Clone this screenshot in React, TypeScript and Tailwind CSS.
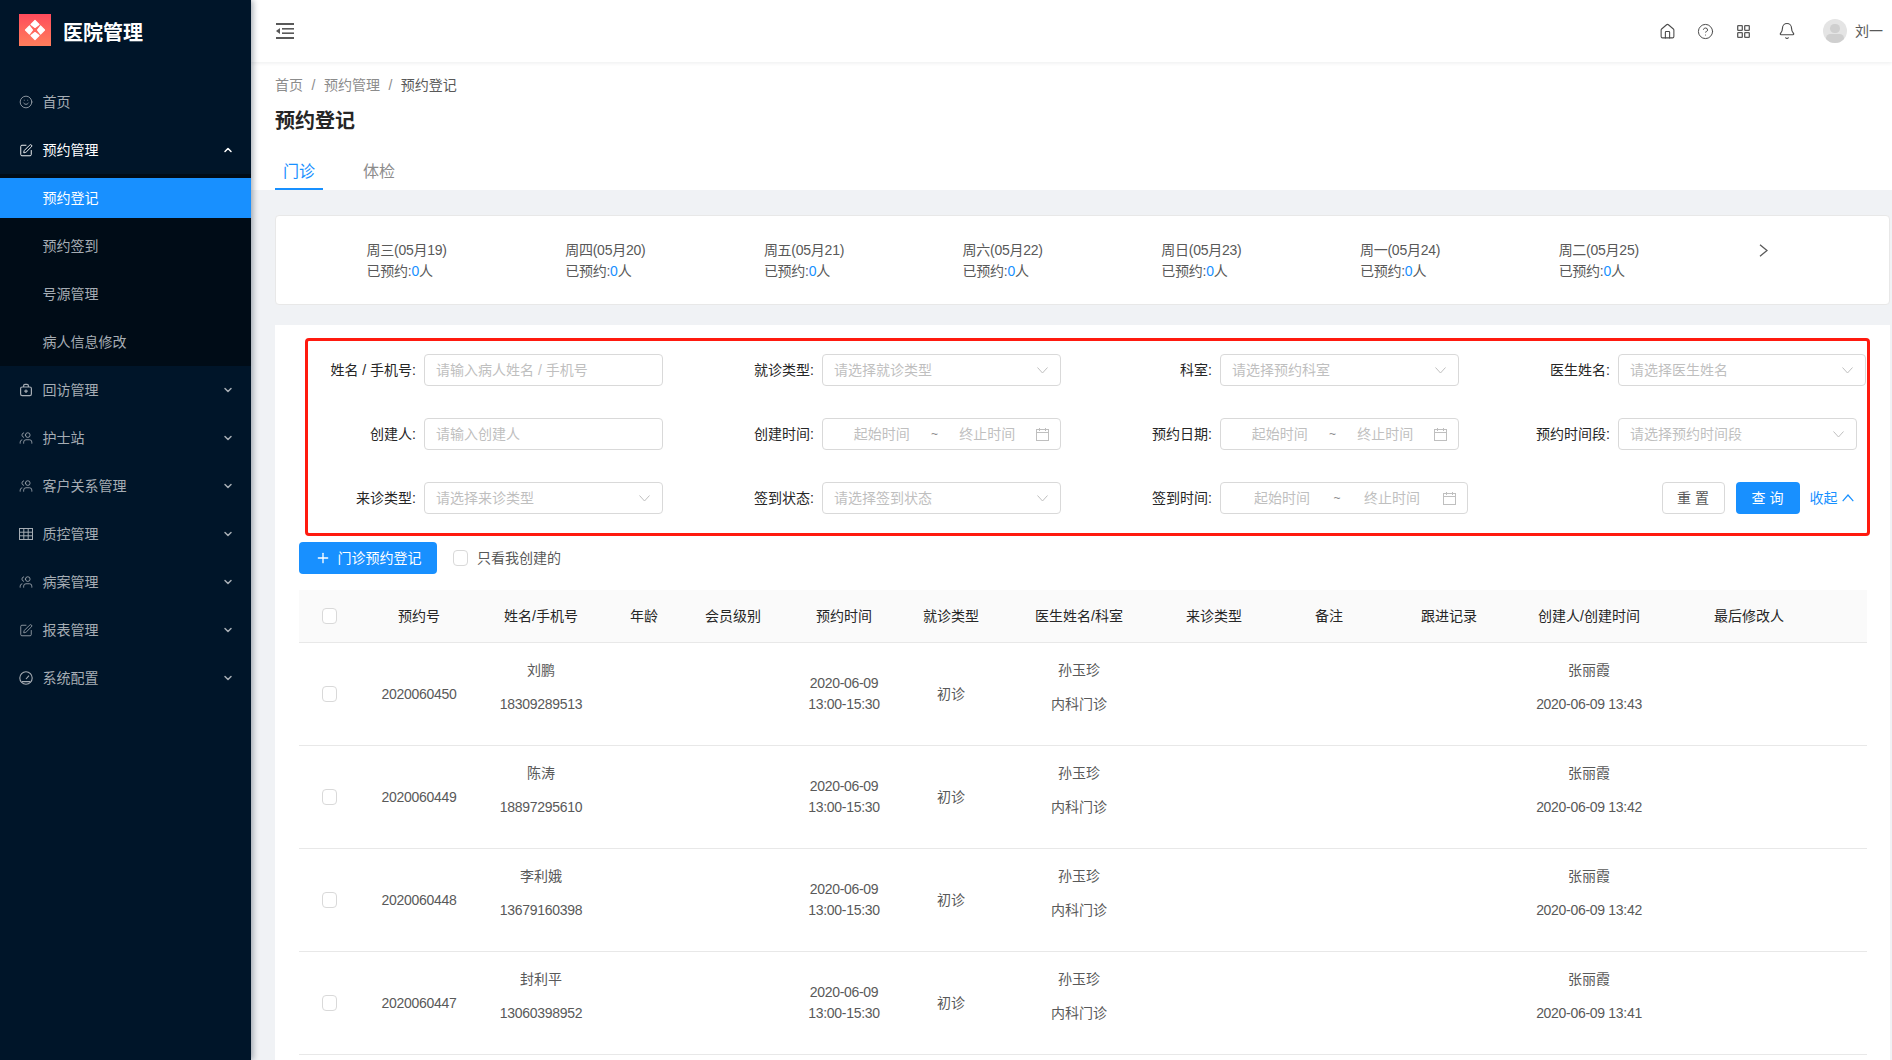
import type { ReactNode } from 'react';
import { ChevronDown, ChevronUp, House, CircleHelp, Bell, Smile, SquarePen, Users, Plus } from 'lucide-react';

const font = { fontFamily: '"Liberation Sans", "Noto Sans CJK SC", sans-serif' };

function BagIcon() {
  return (
    <svg width="14" height="14" viewBox="0 0 14 14" fill="none" stroke="currentColor" strokeWidth="1.2">
      <rect x="1.6" y="4" width="10.8" height="8.6" rx="1.6" />
      <path d="M4.6 4 V2.8 Q4.6 1.4 6 1.4 H8 Q9.4 1.4 9.4 2.8 V4 M7 6.4 V10 M5.2 8.2 H8.8" />
    </svg>
  );
}

function GridIcon() {
  return (
    <svg width="14" height="12" viewBox="0 0 14 12" fill="none" stroke="currentColor" strokeWidth="1">
      <rect x="0.5" y="0.5" width="13" height="11" />
      <path d="M0.5 4.2 H13.5 M0.5 7.8 H13.5 M4.8 0.5 V11.5 M9.2 0.5 V11.5" />
    </svg>
  );
}

function GaugeIcon() {
  return (
    <svg width="14" height="14" viewBox="0 0 14 14" fill="none" stroke="currentColor" strokeWidth="1.1">
      <circle cx="7" cy="7" r="6.2" />
      <path d="M7 8 L10 4.6 M3 10.6 H11" />
    </svg>
  );
}

const people = <Users size={16} strokeWidth={1.4} className="-scale-x-100" />;

const menus: { label: string; icon: ReactNode }[] = [
  { label: '回访管理', icon: <BagIcon /> },
  { label: '护士站', icon: people },
  { label: '客户关系管理', icon: people },
  { label: '质控管理', icon: <GridIcon /> },
  { label: '病案管理', icon: people },
  { label: '报表管理', icon: <SquarePen size={15} strokeWidth={1.4} /> },
  { label: '系统配置', icon: <GaugeIcon /> },
];

const days = ['周三(05月19)', '周四(05月20)', '周五(05月21)', '周六(05月22)', '周日(05月23)', '周一(05月24)', '周二(05月25)'];

const columns = ['预约号', '姓名/手机号', '年龄', '会员级别', '预约时间', '就诊类型', '医生姓名/科室', '来诊类型', '备注', '跟进记录', '创建人/创建时间', '最后修改人'];

const rows = [
  { no: '2020060450', name: '刘鹏', phone: '18309289513', created: '2020-06-09 13:43' },
  { no: '2020060449', name: '陈涛', phone: '18897295610', created: '2020-06-09 13:42' },
  { no: '2020060448', name: '李利娥', phone: '13679160398', created: '2020-06-09 13:42' },
  { no: '2020060447', name: '封利平', phone: '13060398952', created: '2020-06-09 13:41' },
];

const gridCols = 'grid grid-cols-[60px_120px_124px_82px_96px_126px_88px_168px_102px_128px_112px_168px_152px_42px]';

function Logo() {
  return (
    <div className="w-8 h-8 bg-gradient-to-b from-[#ff4a5c] to-[#ff7d5c] flex items-center justify-center">
      <svg width="24" height="24" viewBox="0 0 24 24" fill="#fff" stroke="#fff" strokeWidth="1.2" strokeLinejoin="round">
        <path d="M12 2.5 L16 6.5 L12 9.5 L8 6.5 Z M2.5 12 L6.5 8 L9.5 12 L6.5 16 Z M21.5 12 L17.5 8 L14.5 12 L17.5 16 Z M12 21.5 L16 17.5 L12 14.5 L8 17.5 Z" />
      </svg>
    </div>
  );
}

function MenuItem({ label, icon, open }: { label: string; icon: ReactNode; open?: boolean }) {
  return (
    <div className={'h-10 flex items-center pl-[19px] pr-[17px] text-sm ' + (open ? 'text-white' : 'text-[#a6adb4]')}>
      <span className="w-[14px] h-[14px] flex items-center justify-center mr-[9.5px]">{icon}</span>
      <span className="flex-1">{label}</span>
      {open !== undefined && (open ? <ChevronUp size={12} strokeWidth={3} /> : <ChevronDown size={12} strokeWidth={3} />)}
    </div>
  );
}

function Sidebar() {
  return (
    <aside className="w-[251px] shrink-0 h-full bg-[#001529] shadow-[2px_0_6px_rgba(0,21,41,0.35)] z-10 overflow-hidden">
      <div className="h-[60px] flex items-center pl-[19px]">
        <Logo />
        <span className="ml-3 mt-[6px] text-xl font-semibold text-white">医院管理</span>
      </div>
      <div className="pt-[22px]">
        <MenuItem label="首页" icon={<Smile size={16} strokeWidth={1.4} />} />
        <div className="mt-2">
          <MenuItem label="预约管理" icon={<SquarePen size={15} strokeWidth={1.6} />} open />
        </div>
        <div className="mt-1 bg-[#000c17] py-1 flex flex-col gap-2 text-sm text-[#a6adb4]">
          <div className="h-10 bg-[#1890ff] text-white flex items-center pl-[42.5px]">预约登记</div>
          <div className="h-10 flex items-center pl-[42.5px]">预约签到</div>
          <div className="h-10 flex items-center pl-[42.5px]">号源管理</div>
          <div className="h-10 flex items-center pl-[42.5px]">病人信息修改</div>
        </div>
        <div className="mt-1 flex flex-col gap-2">
          {menus.map((m) => (
            <MenuItem key={m.label} label={m.label} icon={m.icon} open={false} />
          ))}
        </div>
      </div>
    </aside>
  );
}

function Topbar() {
  return (
    <header className="h-[62px] shrink-0 bg-white shadow-[0_1px_4px_rgba(0,21,41,0.08)] z-[5] flex items-center pl-[25px] pr-[9px] text-[#4a4a4a]">
      <svg width="18" height="16" viewBox="0 0 18 16" fill="#595959">
        <rect x="0" y="0" width="18" height="2" />
        <rect x="6" y="5" width="12" height="1.6" />
        <rect x="6" y="9.4" width="12" height="1.6" />
        <rect x="0" y="14" width="18" height="2" />
        <path d="M4 5 L0 8 L4 11 Z" />
      </svg>
      <div className="flex-1" />
      <House size={17} strokeWidth={1.5} />
      <CircleHelp size={17} strokeWidth={1.4} className="ml-[21px]" />
      <svg width="13" height="13" viewBox="0 0 13 13" fill="none" stroke="#595959" strokeWidth="1.3" className="ml-[23px]">
        <rect x="0.7" y="0.7" width="4.6" height="4.6" rx="0.6" />
        <rect x="7.7" y="0.7" width="4.6" height="4.6" rx="0.6" />
        <rect x="0.7" y="7.7" width="4.6" height="4.6" rx="0.6" />
        <rect x="7.7" y="7.7" width="4.6" height="4.6" rx="0.6" />
      </svg>
      <Bell size={18} strokeWidth={1.5} className="ml-[28px]" />
      <div className="ml-[27px] w-6 h-6 rounded-full bg-[#e4e4e4] overflow-hidden flex flex-col items-center">
        <div className="w-[10px] h-[10px] rounded-full bg-[#cfcfcf] mt-[5px]" />
        <div className="w-[18px] h-[10px] rounded-full bg-[#cfcfcf] mt-[1px]" />
      </div>
      <span className="ml-2 text-sm text-[#595959]">刘一</span>
    </header>
  );
}

function DownIcon() {
  return (
    <svg width="11" height="7" viewBox="0 0 11 7" fill="none" stroke="#bfbfbf" strokeWidth="1">
      <path d="M0.5 0.5 L5.5 6 L10.5 0.5" />
    </svg>
  );
}

function CalendarIcon() {
  return (
    <svg width="13" height="13" viewBox="0 0 13 13" fill="none" stroke="#bfbfbf" strokeWidth="1" className="shrink-0">
      <rect x="0.5" y="1.5" width="12" height="11" />
      <path d="M0.5 4.5 H12.5 M3.5 0 V3 M9.5 0 V3" />
    </svg>
  );
}

function Field({ label, children }: { label: string; children: ReactNode }) {
  return (
    <div className="flex items-center h-8">
      <label className="w-[108px] text-right text-sm text-[#262626] whitespace-nowrap">{label}:</label>
      <div className="ml-2">{children}</div>
    </div>
  );
}

function TextBox({ placeholder }: { placeholder: string }) {
  return (
    <div className="w-[239px] h-8 border border-[#d9d9d9] rounded flex items-center px-[11px] text-sm text-[#bfbfbf]">{placeholder}</div>
  );
}

function SelectBox({ placeholder, wide }: { placeholder: string; wide?: boolean }) {
  return (
    <div className={'h-8 border border-[#d9d9d9] rounded flex items-center justify-between pl-[11px] pr-[12px] text-sm text-[#bfbfbf] ' + (wide ? 'w-[248px]' : 'w-[239px]')}>
      <span>{placeholder}</span>
      <DownIcon />
    </div>
  );
}

function RangeBox({ wide }: { wide?: boolean }) {
  return (
    <div className={'h-8 border border-[#d9d9d9] rounded flex items-center pl-[10px] pr-[11px] text-sm text-[#bfbfbf] ' + (wide ? 'w-[248px]' : 'w-[239px]')}>
      <span className="flex-1 text-center">起始时间</span>
      <span className="w-2 text-center text-xs text-[#8c8c8c]">~</span>
      <span className="flex-1 text-center">终止时间</span>
      <CalendarIcon />
    </div>
  );
}

function SearchForm() {
  return (
    <div className="ml-[30px] w-[1565px] h-[198px] border-[3px] border-[#ff1a0f] rounded-sm pt-[13px]">
      <div className="grid grid-cols-[repeat(4,398px)] gap-y-8">
        <Field label="姓名 / 手机号"><TextBox placeholder="请输入病人姓名 / 手机号" /></Field>
        <Field label="就诊类型"><SelectBox placeholder="请选择就诊类型" /></Field>
        <Field label="科室"><SelectBox placeholder="请选择预约科室" /></Field>
        <Field label="医生姓名"><SelectBox placeholder="请选择医生姓名" wide /></Field>
        <Field label="创建人"><TextBox placeholder="请输入创建人" /></Field>
        <Field label="创建时间"><RangeBox /></Field>
        <Field label="预约日期"><RangeBox /></Field>
        <Field label="预约时间段"><SelectBox placeholder="请选择预约时间段" /></Field>
        <Field label="来诊类型"><SelectBox placeholder="请选择来诊类型" /></Field>
        <Field label="签到状态"><SelectBox placeholder="请选择签到状态" /></Field>
        <Field label="签到时间"><RangeBox wide /></Field>
        <div className="flex items-center h-8 pl-[159.5px]">
          <button className="w-[63px] h-8 shrink-0 border border-[#d9d9d9] rounded bg-white text-sm text-[#595959]">重 置</button>
          <button className="ml-[11px] w-[64px] h-8 shrink-0 rounded bg-[#1890ff] text-sm text-white">查 询</button>
          <span className="ml-[10px] text-sm text-[#1890ff] whitespace-nowrap">收起</span>
          <svg width="12" height="8" viewBox="0 0 12 8" fill="none" stroke="#1890ff" strokeWidth="1.2" className="ml-[4px] shrink-0">
            <path d="M0.7 7.2 L6 1 L11.3 7.2" />
          </svg>
        </div>
      </div>
    </div>
  );
}

function Checkbox() {
  return <span className="block w-[15px] h-[16px] border border-[#d9d9d9] rounded-sm bg-white" />;
}

function Num({ children }: { children: ReactNode }) {
  return <span className="tracking-[-0.3px]">{children}</span>;
}

function AppointmentTable() {
  return (
    <div className="ml-[24px] mr-[23px] text-sm text-[#595959]">
      <div className={gridCols + ' h-[53px] items-center text-center bg-[#fafafa] border-b border-[#e8e8e8] text-[#262626]'}>
        <div className="flex justify-center"><Checkbox /></div>
        {columns.map((c) => (
          <div key={c} className="whitespace-nowrap">{c}</div>
        ))}
        <div />
      </div>
      {rows.map((r) => (
        <div key={r.no} className={gridCols + ' h-[103px] items-center text-center border-b border-[#e8e8e8]'}>
          <div className="flex justify-center"><Checkbox /></div>
          <Num>{r.no}</Num>
          <div className="flex flex-col gap-[14px] pb-[14px]">
            <span>{r.name}</span>
            <Num>{r.phone}</Num>
          </div>
          <div />
          <div />
          <div className="flex flex-col leading-[21px]">
            <Num>2020-06-09</Num>
            <Num>13:00-15:30</Num>
          </div>
          <div>初诊</div>
          <div className="flex flex-col gap-[14px] pb-[14px]">
            <span>孙玉珍</span>
            <span>内科门诊</span>
          </div>
          <div />
          <div />
          <div />
          <div className="flex flex-col gap-[14px] pb-[14px] whitespace-nowrap">
            <span>张丽霞</span>
            <Num>{r.created}</Num>
          </div>
          <div />
          <div />
        </div>
      ))}
    </div>
  );
}

export default function App() {
  return (
    <div className="flex h-screen overflow-hidden bg-[#f0f2f5]" style={font}>
      <Sidebar />
      <div className="flex-1 min-w-0 flex flex-col h-full">
        <Topbar />
        <section className="h-[128px] shrink-0 bg-white pl-6 pt-[13px]">
          <div className="text-sm text-[#8c8c8c] h-5 leading-5 flex">
            <span>首页</span>
            <span className="mx-[8.5px]">/</span>
            <span>预约管理</span>
            <span className="mx-[8.5px]">/</span>
            <span className="text-[#595959]">预约登记</span>
          </div>
          <h1 className="mt-3 text-xl leading-7 font-semibold text-[#262626]">预约登记</h1>
          <div className="mt-[23px] flex text-base text-[#8c8c8c]">
            <div className="w-12 h-8 text-center leading-7 text-[#1890ff] border-b-2 border-[#1890ff]">门诊</div>
            <div className="ml-10 leading-7">体检</div>
          </div>
        </section>
        <div className="flex-1 min-h-0 pt-[25px] pl-6 pr-[2px] flex flex-col">
          <div className="h-[90px] shrink-0 bg-white border border-[#e8e8e8] rounded-sm flex items-center pl-[90.5px] text-sm text-[#595959] tracking-[-0.25px]">
            {days.map((d) => (
              <div key={d} className="w-[198.7px] leading-[21px] pt-[2px]">
                <div>{d}</div>
                <div>已预约:<span className="text-[#1890ff]">0</span>人</div>
              </div>
            ))}
            <svg width="9" height="13" viewBox="0 0 9 13" fill="none" stroke="#595959" strokeWidth="1.3" className="mb-[20px] ml-[2px]">
              <path d="M1 0.8 L8 6.5 L1 12.2" />
            </svg>
          </div>
          <div className="mt-[20px] flex-1 min-h-0 bg-white pt-[13px] overflow-hidden">
            <SearchForm />
            <div className="ml-[24px] mt-[6px] mb-[16px] flex items-center">
              <button className="w-[138px] h-8 rounded bg-[#1890ff] text-sm text-white flex items-center justify-center gap-[7px]">
                <Plus size={16} strokeWidth={2} />门诊预约登记
              </button>
              <span className="ml-4"><Checkbox /></span>
              <span className="ml-[9px] text-sm text-[#595959]">只看我创建的</span>
            </div>
            <AppointmentTable />
          </div>
        </div>
      </div>
    </div>
  );
}
